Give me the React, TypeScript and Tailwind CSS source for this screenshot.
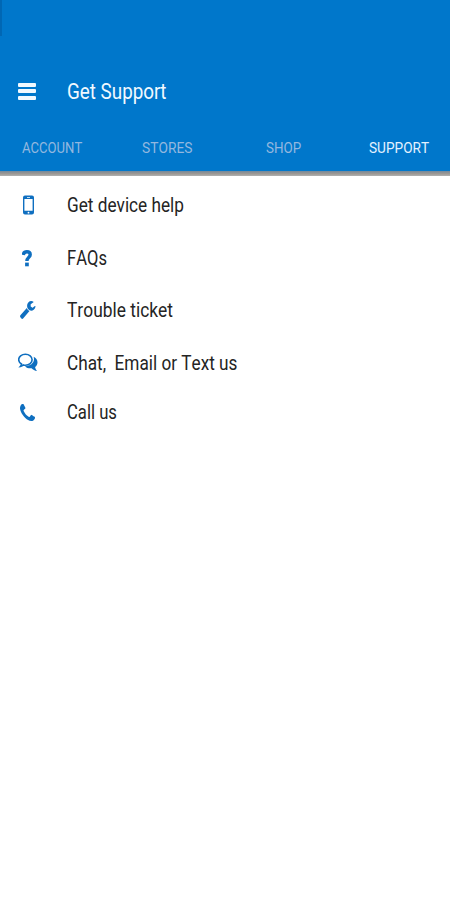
import React from "react";

type IconProps = { className: string; viewBox: string; children: React.ReactNode };

function Icon({ className, viewBox, children }: IconProps) {
  return (
    <svg viewBox={viewBox} preserveAspectRatio="none" fill="currentColor" className={className}>
      {children}
    </svg>
  );
}

const tabs = [
  { label: "ACCOUNT", cell: "ml-[21.5px] w-[120.5px]", text: "scale-x-[0.845] text-[#93b7df]" },
  { label: "STORES", cell: "w-[124px]", text: "scale-x-[0.89] text-[#93b7df]" },
  { label: "SHOP", cell: "w-[103px]", text: "scale-x-[0.865] text-[#93b7df]" },
  { label: "SUPPORT", cell: "w-[60px]", text: "scale-x-[0.88] text-[#e4f2ff]" },
];

const rows = [
  {
    label: "Get device help",
    row: "h-[53px]",
    text: "scale-x-[0.882]",
    icon: (
      <Icon className="mb-px ml-[23px] h-[20px] w-[11px]" viewBox="0 0 11 20">
        <path
          fillRule="evenodd"
          d="M2 0.5h7a2 2 0 0 1 2 2v15a2 2 0 0 1-2 2H2a2 2 0 0 1-2-2v-15a2 2 0 0 1 2-2zM1.4 4v11.8h8.2V4zM4 2v.7h3V2zM5.5 16.8a.9.9 0 1 0 0 1.8a.9.9 0 1 0 0-1.8z"
        />
      </Icon>
    ),
  },
  {
    label: "FAQs",
    row: "h-[52px]",
    text: "scale-x-[0.85]",
    icon: (
      <Icon className="mb-px ml-[22px] h-[17px] w-[10px]" viewBox="0 0 10 17">
        <path
          d="M1.2 4.900C1.600 2.700 3 1.800 4.900 1.800c2.100 0 3.300 1.100 3.300 2.900c0 2.600-3.300 2.900-3.300 6.300"
          fill="none"
          stroke="currentColor"
          strokeWidth="3.4"
        />
        <path d="M3.1 12.600h3.700v3.700H3.100z" />
      </Icon>
    ),
  },
  {
    label: "Trouble ticket",
    row: "h-[53px]",
    text: "scale-x-[0.891]",
    icon: (
      <Icon className="mb-px ml-[20px] h-[18px] w-[15.5px]" viewBox="80 128 1650 1650">
        <path d="M1092 1052l-682 682q-37 37-90 37-52 0-91-37l-106-108q-38-36-38-90 0-53 38-91l681-681q39 98 114.5 173.5t173.5 114.5zm634-435q0 39-23 106-47 134-164.5 217.5t-258.5 83.5q-185 0-316.5-131.5t-131.5-316.5 131.5-316.5 316.5-131.5q58 0 121.5 16.5t107.5 46.5q16 11 16 28t-16 28l-293 169v224l193 107q5-3 79-48.5t135.5-81 70.5-35.5q15 0 23.5 10t8.5 25z" />
      </Icon>
    ),
  },
  {
    label: "Chat,  Email or Text us",
    row: "h-[49px]",
    text: "scale-x-[0.882]",
    icon: (
      <Icon className="mb-[3px] ml-[18px] h-[19px] w-[20px]" viewBox="0 0 20 19">
        <path
          d="M7.4 1.2c3.8 0 6.7 2.4 6.7 5.5s-2.9 5.5-6.7 5.5c-.7 0-1.4-.1-2-.3c-.8.8-1.8 1.3-3 1.5c.6-.7 1-1.5 1.1-2.4C1.8 10 .7 8.5.7 6.7c0-3.1 2.9-5.5 6.7-5.5z"
          fill="none"
          stroke="currentColor"
          strokeWidth="1.6"
        />
        <path d="M15.6 3.700c2.400 1.100 3.900 3.100 3.900 5.600c0 2.100-.9 3.700-2.400 4.800c.2 1.500.8 2.700 1.900 4c-2.200-.3-4.100-1.300-5.400-2.800c-2.700.3-5-.4-6.600-2.100c5.100 0 9-2.900 9-7.100c0-.8-.1-1.600-.4-2.400z" />
      </Icon>
    ),
  },
  {
    label: "Call us",
    row: "h-[50px]",
    text: "scale-x-[0.855]",
    icon: (
      <Icon className="mb-px ml-[20px] h-[17px] w-[15px]" viewBox="192 128 1408 1408">
        <path d="M1600 1240q0 27-10 70.5t-21 68.5q-21 50-122 106-94 51-186 51-27 0-53-3.5t-57.5-12.5-47-14.5-55.5-20.5-49-18q-98-35-175-83-127-79-264-216t-216-264q-48-77-83-175-3-9-18-49t-20.5-55.5-14.5-47-12.5-57.5-3.5-53q0-92 51-186 56-101 106-122 25-11 68.5-21t70.5-10q14 0 21 3 18 6 53 76 11 19 30 54t35 63.5 31 53.5q3 4 17.5 25t21.5 35.5 7 28.5q0 20-28.5 50t-62 55-62 53-28.5 46q0 9 5 22.5t8.5 20.5 14 24 11.5 19q76 137 174 235t235 174q2 1 19 11.5t24 14 20.5 8.5 22.5 5q18 0 46-28.5t53-62 55-62 50-28.5q14 0 28.5 7t35.5 21.5 25 17.5q25 15 53.5 31t63.5 35 54 30q70 35 76 53 3 7 3 21z" />
      </Icon>
    ),
  },
];

export default function App() {
  return (
    <div className="flex h-[900px] w-[450px] flex-col overflow-hidden bg-white font-['Roboto',sans-serif] [font-kerning:none]">
      <header className="flex h-[171px] shrink-0 flex-col bg-[#0077cb]">
        <div className="h-[36px] w-[2px] bg-[#0067b4]" />
        <div className="mt-[36px] flex h-[38px] items-center">
          <div className="ml-[18px] flex w-[48.5px] flex-col gap-[2.5px]">
            <div className="h-[4px] w-[17.5px] rounded-[1px] bg-[#f1f9ff]" />
            <div className="h-[4px] w-[17.5px] rounded-[1px] bg-[#f1f9ff]" />
            <div className="h-[4px] w-[17.5px] rounded-[1px] bg-[#f1f9ff]" />
          </div>
          <h1 className="origin-left scale-x-[0.855] text-[22px] whitespace-nowrap text-[#f1f9ff]">Get Support</h1>
        </div>
        <nav className="mt-[27px] flex h-[22px] items-center">
          {tabs.map((tab) => (
            <div key={tab.label} className={tab.cell}>
              <span className={`block w-max origin-left text-[15.5px] leading-[22px] ${tab.text}`}>{tab.label}</span>
            </div>
          ))}
        </nav>
      </header>
      <div className="h-[5px] shrink-0 bg-linear-to-b from-[#74889a] via-[#9a9692] to-[#b0b0b0]" />
      <main className="flex flex-col pt-[4px]">
        {rows.map((item) => (
          <div key={item.label} className={`flex items-start ${item.row}`}>
            <div className="flex h-[51px] w-[66.5px] shrink-0 items-center text-[#0f6fc0]">{item.icon}</div>
            <span className={`block w-max origin-left text-[19.5px] leading-[52px] whitespace-pre text-[#242424] ${item.text}`}>
              {item.label}
            </span>
          </div>
        ))}
      </main>
    </div>
  );
}
